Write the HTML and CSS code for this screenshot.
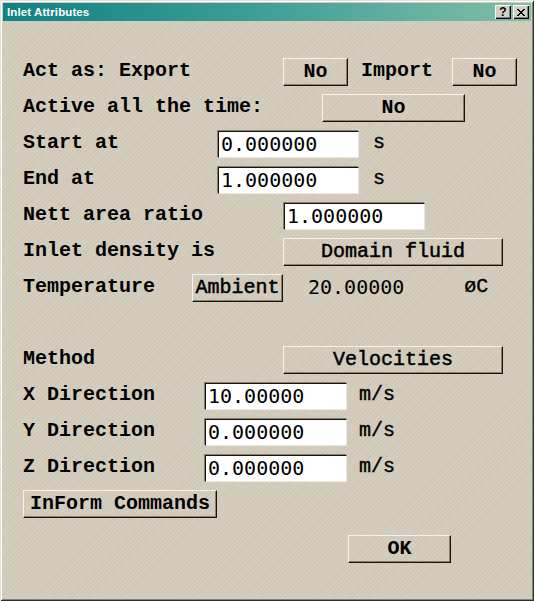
FILE: index.html
```html
<!DOCTYPE html>
<html>
<head>
<title>Inlet Attributes</title>
<link rel="stylesheet" href="styles.css">
</head>
<body>
    <div class="window">
        <div class="titlebar">
            <span class="title">Inlet Attributes</span>
            <div class="title-buttons">
                <span class="tbtn">?</span>
                <span class="tbtn">
                    <svg width="8" height="7" viewBox="0 0 8 7"><path d="M0 0 L7 7 M1 0 L8 7 M7 0 L0 7 M8 0 L1 7" stroke="#000" stroke-width="1"/></svg>
                </span>
            </div>
        </div>
        <div class="content">
            <div class="row">
                <span class="label lbl-act">Act as: Export</span>
                <button class="btn btn-small">No</button>
                <span class="label lbl-import">Import</span>
                <button class="btn btn-small">No</button>
            </div>
            <div class="row">
                <span class="label lbl-active">Active all the time:</span>
                <button class="btn btn-mid">No</button>
            </div>
            <div class="row">
                <span class="label lbl-time">Start at</span>
                <input class="field" type="text" value="0.000000">
                <span class="unit unit-s">s</span>
            </div>
            <div class="row">
                <span class="label lbl-time">End at</span>
                <input class="field" type="text" value="1.000000">
                <span class="unit unit-s">s</span>
            </div>
            <div class="row">
                <span class="label lbl-ratio">Nett area ratio</span>
                <input class="field" type="text" value="1.000000">
            </div>
            <div class="row">
                <span class="label lbl-ratio-btn">Inlet density is</span>
                <button class="btn btn-wide btn-light">Domain fluid</button>
            </div>
            <div class="row">
                <span class="label lbl-temp">Temperature</span>
                <button class="btn btn-ambient btn-light">Ambient</button>
                <span class="value">20.00000</span>
                <span class="unit unit-deg">øC</span>
            </div>
            <div class="row row-spacer"></div>
            <div class="row">
                <span class="label lbl-ratio-btn">Method</span>
                <button class="btn btn-wide btn-light">Velocities</button>
            </div>
            <div class="row">
                <span class="label lbl-dir">X Direction</span>
                <input class="field field-dir" type="text" value="10.00000">
                <span class="unit unit-ms">m/s</span>
            </div>
            <div class="row">
                <span class="label lbl-dir">Y Direction</span>
                <input class="field field-dir" type="text" value="0.000000">
                <span class="unit unit-ms">m/s</span>
            </div>
            <div class="row">
                <span class="label lbl-dir">Z Direction</span>
                <input class="field field-dir" type="text" value="0.000000">
                <span class="unit unit-ms">m/s</span>
            </div>
            <div class="row">
                <button class="btn btn-inform">InForm Commands</button>
            </div>
            <div class="row row-ok">
                <button class="btn btn-ok">OK</button>
            </div>
        </div>
    </div>
</body>
</html>
```

FILE: styles.css
```css
/**
 * Generic styles
 */
* {
    box-sizing: border-box;
}
body {
    margin: 0;
    font-family: "Liberation Mono", "Courier New", monospace;
    color: #000;
}

/**
 * Dialog frame
 */
.window {
    width: 534px;
    height: 601px;
    padding: 3px;
    display: flex;
    flex-direction: column;
    background-color: #d4cdbd;
    background-image: repeating-linear-gradient(135deg, #d5cebf 0 2px, #cdc6b5 2px 3px);
    box-shadow:
        inset 1px 1px 0 #e4e0d6,
        inset -1px -1px 0 #303030,
        inset 2px 2px 0 #ffffff,
        inset -2px -2px 0 #8a8272;
}
.titlebar {
    height: 18px;
    display: flex;
    justify-content: space-between;
    align-items: center;
    padding: 0 2px 0 4px;
    background: linear-gradient(90deg, #0f8282, #3a9c96 45%, #82bea9);
}
.title {
    color: #fff;
    font: bold 11.5px "Liberation Sans", Arial, sans-serif;
    letter-spacing: 0.1px;
}
.title-buttons {
    display: flex;
    gap: 2px;
}
.tbtn {
    width: 16px;
    height: 14px;
    display: flex;
    justify-content: center;
    align-items: center;
    background: #d4d0c8;
    font: bold 12px "Liberation Sans", Arial, sans-serif;
    box-shadow:
        inset 1px 1px 0 #fff,
        inset -1px -1px 0 #000,
        inset -2px -2px 0 #808080;
}

/**
 * Form rows
 */
.content {
    padding: 33px 0 0 20px;
}
.row {
    display: flex;
    align-items: center;
    height: 36px;
}
.row-ok {
    margin-top: 9px;
}
.label,
.unit {
    flex: none;
    font-size: 20px;
    font-weight: bold;
    white-space: pre;
    padding-bottom: 3px;
}
.lbl-act { width: 260px; }
.lbl-import { margin: 0 19px 0 13px; }
.lbl-active { width: 299px; }
.lbl-time { width: 195px; }
.lbl-ratio { width: 261px; }
.lbl-ratio-btn { width: 260px; }
.lbl-temp { width: 169px; }
.lbl-dir { width: 182px; }

.unit { font-weight: normal; -webkit-text-stroke: 0.4px #000; }
.unit-s { margin-left: 14px; }
.unit-ms { margin-left: 12px; }
.unit-deg { margin-left: 60px; }
.value {
    margin-left: 25px;
    padding-bottom: 3px;
    font: 20px "DejaVu Sans Mono", monospace;
}

/**
 * Controls
 */
.btn {
    flex: none;
    height: 28px;
    padding: 0 0 2px;
    font: bold 20px "Liberation Mono", "Courier New", monospace;
    color: #000;
    background: transparent;
    border: 1px solid;
    border-color: #f6f3ea #1a1208 #1a1208 #f6f3ea;
    box-shadow: inset -1px -1px 0 #8a7f6a;
}
.btn-light {
    font-weight: normal;
    -webkit-text-stroke: 0.5px #000;
}
.btn-small { width: 65px; }
.btn-mid { width: 143px; }
.btn-wide { width: 220px; }
.btn-ambient { width: 91px; }
.btn-inform { width: 194px; }
.btn-ok { width: 103px; margin-left: 325px; }

.field {
    flex: none;
    width: 141px;
    height: 27px;
    padding: 0 0 0 2px;
    font: 20px "DejaVu Sans Mono", monospace;
    color: #000;
    background: #fff;
    border: 1px solid;
    border-color: #141414 #ece8de #ece8de #141414;
    box-shadow: -1px -1px 0 #8c7e66;
    outline: none;
}
.field-dir { width: 142px; }
```
